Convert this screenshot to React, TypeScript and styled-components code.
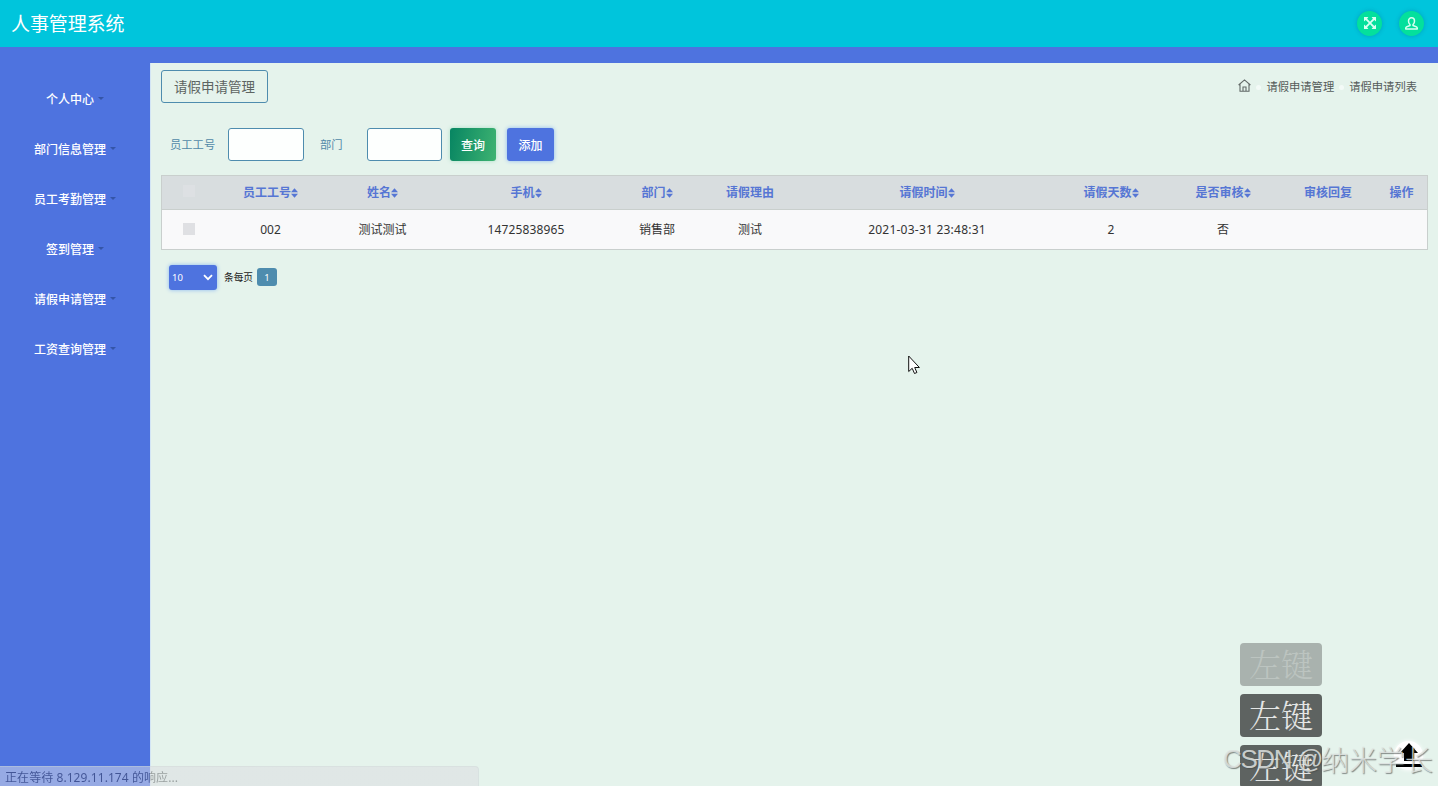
import React from "react";
import styled, { createGlobalStyle } from "styled-components";

const GlobalStyle = createGlobalStyle`
  * { box-sizing: border-box; }
  html, body { margin: 0; padding: 0; overflow: hidden; }
  body {
    font-family: "Noto Sans", "Noto Sans CJK SC", sans-serif;
    font-size: 12px;
    background: #e5f3ec;
  }
`;

const Page = styled.div`
  position: relative;
  display: flex;
  flex-direction: column;
  height: 786px;
  overflow: hidden;
`;

const TopBar = styled.header`
  display: flex;
  align-items: center;
  justify-content: space-between;
  height: 47px;
  padding: 0 14px 0 11px;
  background: #00c5dc;
`;

const Brand = styled.h1`
  margin: 0;
  padding-bottom: 2px;
  font: 400 19px/45px "Noto Sans CJK SC", sans-serif;
  letter-spacing: -0.1px;
  color: #fff;
`;

const TopActions = styled.div`
  display: flex;
  gap: 17px;
  padding-bottom: 1px;
`;

const RoundButton = styled.button`
  display: flex;
  align-items: center;
  justify-content: center;
  width: 25px;
  height: 25px;
  padding: 0;
  border: 0;
  border-radius: 50%;
  background: #04e09c;
  box-shadow: 0 0 4px rgba(0, 120, 150, 0.45);
`;

const Body = styled.div`
  display: flex;
  flex: 1;
  padding-top: 16px;
  background: #4e73df;
`;

const Sidebar = styled.nav`
  display: flex;
  flex-direction: column;
  width: 150px;
  padding-top: 11px;
`;

const MenuItem = styled.a`
  display: flex;
  align-items: center;
  justify-content: center;
  height: 50px;
  font: 500 12px/50px "Noto Sans CJK SC", sans-serif;
  color: #fff;
`;

const Caret = styled.i`
  margin: -1px 0 0 4px;
  border: 3px solid transparent;
  border-top-color: #3455a8;
  border-bottom: 0;
`;

const Main = styled.main`
  flex: 1;
  padding: 7px 10px 0 10px;
  border-left: 1px solid #d3e5f5;
  background: #e5f3ec;
`;

const TitleRow = styled.div`
  display: flex;
  align-items: flex-start;
  justify-content: space-between;
  height: 58px;
`;

const TitleBox = styled.h2`
  width: 107px;
  height: 33px;
  margin: 0;
  border: 1px solid #4e8cae;
  border-radius: 3px;
  font: 400 13.5px/30px "Noto Sans CJK SC", sans-serif;
  text-align: center;
  color: #5d6462;
`;

const Crumbs = styled.div`
  display: flex;
  align-items: center;
  height: 33px;
  padding-right: 11px;
  font: 400 11.3px/33px "Noto Sans CJK SC", sans-serif;
  color: #555c5a;
`;

const HomeIcon = styled.svg`
  margin: -3px 5px 0 0;
`;

const Dot = styled.i`
  width: 5px;
  height: 5px;
  margin: 2px 5px 0;
  border-radius: 50%;
  background: #f3faf7;

  &:first-of-type { margin-left: 0; }
`;

const SearchRow = styled.form`
  display: flex;
  align-items: center;
  height: 33px;
  padding-left: 9px;
`;

const FieldLabel = styled.label<{ $w: number }>`
  width: ${(p) => p.$w}px;
  font: 400 11.3px/33px "Noto Sans CJK SC", sans-serif;
  color: #5189a8;
`;

const Field = styled.input<{ $w: number; $gap: number }>`
  width: ${(p) => p.$w}px;
  height: 33px;
  margin-right: ${(p) => p.$gap}px;
  border: 1px solid #4e8cae;
  border-radius: 3px;
  background: #fdfffe;
`;

const ActionButton = styled.button<{ $w: number; $bg: string; $glow: string }>`
  width: ${(p) => p.$w}px;
  height: 33px;
  margin-right: 11px;
  padding: 0;
  border: 0;
  border-radius: 3px;
  background: ${(p) => p.$bg};
  box-shadow: 0 0 4px ${(p) => p.$glow};
  font: 500 12px/33px "Noto Sans CJK SC", sans-serif;
  color: #fff;
`;

const Table = styled.table`
  width: 1267px;
  margin-top: 14px;
  table-layout: fixed;
  border: 1px solid #c9cfcd;
  border-spacing: 0;
  text-align: center;
`;

const HeadCell = styled.th`
  height: 34px;
  padding: 0 0 2px;
  border-bottom: 1px solid #c9cfcd;
  background: #d8dddf;
  font: 700 12px/30px "Noto Sans CJK SC", sans-serif;
  color: #5676d4;
  white-space: nowrap;
`;

const Cell = styled.td`
  height: 39px;
  padding: 0;
  background: #f9f9fa;
  line-height: 38px;
  color: #333;
  white-space: nowrap;
`;

const Value = styled.span<{ $ls: number }>`
  letter-spacing: ${(p) => p.$ls}px;
`;

const CheckBox = styled.i<{ $bg: string }>`
  display: block;
  width: 12px;
  height: 12px;
  margin: 0 auto 1px;
  background: ${(p) => p.$bg};
`;

const SortIcon = styled.svg`
  width: 7px;
  height: 10px;
  vertical-align: -1px;
`;

const Pager = styled.div`
  display: flex;
  align-items: center;
  height: 25px;
  margin-top: 15px;
  padding-left: 8px;
`;

const PageSize = styled.div`
  display: flex;
  align-items: center;
  justify-content: space-between;
  width: 48px;
  height: 25px;
  padding: 0 4px 0 3px;
  border-radius: 3px;
  background: #4e73df;
  box-shadow: 0 0 4px #8cb8f0;
  font-size: 9.5px;
  color: #fff;
`;

const PerPage = styled.span`
  margin: 0 4px 0 7px;
  font: 400 9.7px/25px "Noto Sans CJK SC", sans-serif;
  color: #222;
`;

const PageNumber = styled.span`
  width: 20px;
  height: 18px;
  margin-bottom: 1px;
  border-radius: 3px;
  background: #4e8cae;
  font-size: 9.5px;
  line-height: 19px;
  text-align: center;
  color: #fff;
`;

const StatusBubble = styled.div`
  position: absolute;
  left: 0;
  bottom: 0;
  width: 479px;
  height: 20px;
  padding-left: 5px;
  border: 1px solid rgba(205, 215, 212, 0.4);
  border-width: 1px 1px 0 0;
  border-radius: 0 4px 0 0;
  background: linear-gradient(90deg, rgba(222, 225, 233, 0.5) 150px, rgba(222, 225, 228, 0.7) 150px);
  line-height: 21px;
  letter-spacing: 0.07px;
`;

const StatusText = styled.span`
  background: linear-gradient(90deg, #425596 145px, #969d9d 145px);
  background-clip: text;
  color: transparent;
`;

const KeyStack = styled.div`
  position: absolute;
  left: 1240px;
  top: 643px;
  display: flex;
  flex-direction: column;
  gap: 8px;
`;

const KeyHint = styled.div<{ $faded?: boolean }>`
  width: 82px;
  height: 43px;
  border-radius: 4px;
  background: ${(p) => (p.$faded ? "#a9b2ae" : "#5e6361")};
  font: 300 32px/40px "Noto Serif CJK SC", "Noto Sans CJK SC", serif;
  text-align: center;
  color: ${(p) => (p.$faded ? "#bcc4c0" : "#e4e6e5")};
`;

const BackToTop = styled.div`
  position: absolute;
  left: 1394px;
  top: 741px;
  display: flex;
  justify-content: center;
  width: 29px;
  height: 29px;
  border-radius: 50%;
  background: #fff;
  box-shadow: 0 0 4px #fff;
`;

const Watermark = styled.div`
  position: absolute;
  left: 1223px;
  top: 740px;
  display: flex;
  font: 300 28px/38px "Noto Sans CJK SC", sans-serif;
  letter-spacing: -0.1px;
  color: rgba(222, 226, 224, 0.85);
  text-shadow: 1px 1px 1px rgba(70, 75, 73, 0.65);
  white-space: nowrap;
`;

const WatermarkSite = styled.span`
  width: 98px;
  font-family: "Liberation Sans", sans-serif;
  font-size: 26px;
  letter-spacing: -1.4px;
`;

const Pointer = styled.svg`
  position: absolute;
  left: 908px;
  top: 355px;
`;

const menu = ["个人中心", "部门信息管理", "员工考勤管理", "签到管理", "请假申请管理", "工资查询管理"];

const columns: { label: string; width: number; sort?: boolean }[] = [
  { label: "员工工号", width: 109, sort: true },
  { label: "姓名", width: 115, sort: true },
  { label: "手机", width: 172, sort: true },
  { label: "部门", width: 90, sort: true },
  { label: "请假理由", width: 96 },
  { label: "请假时间", width: 258, sort: true },
  { label: "请假天数", width: 110, sort: true },
  { label: "是否审核", width: 114, sort: true },
  { label: "审核回复", width: 96 },
  { label: "操作", width: 51 },
];

const record = ["002", "测试测试", "14725838965", "销售部", "测试", "2021-03-31 23:48:31", "2", "否", "", ""];

const spacing = (value: string) => (value.length > 11 ? 0.23 : value.length === 11 ? 0.14 : 0);

export default function App() {
  return (
    <Page>
      <GlobalStyle />
      <TopBar>
        <Brand>人事管理系统</Brand>
        <TopActions>
          <RoundButton aria-label="全屏">
            <svg width="12" height="12" viewBox="0 0 12 12" fill="#d9fff2">
              <path d="M0 0h4.400L3.100 1.700 6 4.800l2.900-3.100L7.600 0H12v4.400l-1.700-1.300L7.200 6l3.100 2.900L12 7.600V12H7.600l1.300-1.700L6 7.200l-2.900 3.100L4.400 12H0V7.600l1.700 1.300L4.800 6 1.700 3.100 0 4.400z" />
            </svg>
          </RoundButton>
          <RoundButton aria-label="用户">
            <svg width="13" height="13" viewBox="0 0 13 13" fill="none" stroke="#d9fff2" strokeWidth="1.500" strokeLinejoin="round">
              <path d="M5 7.700C3.900 6.800 3.500 5.500 3.500 4 3.500 2 4.700.8 6.500.8S9.500 2 9.500 4c0 1.500-.4 2.800-1.500 3.700v.8l3.500 1.400c.6.3.8.9.8 2H.7c0-1.100.2-1.700.8-2L5 8.500z" />
            </svg>
          </RoundButton>
        </TopActions>
      </TopBar>
      <Body>
        <Sidebar>
          {menu.map((m) => (
            <MenuItem key={m}>
              {m}
              <Caret />
            </MenuItem>
          ))}
        </Sidebar>
        <Main>
          <TitleRow>
            <TitleBox>请假申请管理</TitleBox>
            <Crumbs>
              <HomeIcon width="13" height="13" viewBox="0 0 13 13" fill="none" stroke="#626967" strokeWidth="1.100">
                <path d="M.6 6 6.500.9 12.400 6M2 5v7.300h9V5M5 12.300V8h3v4.300" />
              </HomeIcon>
              <Dot />
              <span>请假申请管理</span>
              <Dot />
              <span>请假申请列表</span>
            </Crumbs>
          </TitleRow>
          <SearchRow>
            <FieldLabel $w={58}>员工工号</FieldLabel>
            <Field $w={76} $gap={16} />
            <FieldLabel $w={47}>部门</FieldLabel>
            <Field $w={75} $gap={8} />
            <ActionButton type="button" $w={46} $bg="linear-gradient(100deg, #078562, #3eb371)" $glow="#a9dec5">
              查询
            </ActionButton>
            <ActionButton type="button" $w={47} $bg="#4e73df" $glow="#8cb8f0">
              添加
            </ActionButton>
          </SearchRow>
          <Table>
            <colgroup>
              <col style={{ width: 54 }} />
              {columns.map((c) => (
                <col key={c.label} style={{ width: c.width }} />
              ))}
            </colgroup>
            <thead>
              <tr>
                <HeadCell>
                  <CheckBox $bg="#dde0e3" />
                </HeadCell>
                {columns.map((c) => (
                  <HeadCell key={c.label}>
                    {c.label}
                    {c.sort && (
                      <SortIcon viewBox="0 0 7 10" fill="#5676d4">
                        <path d="M0 4.300 3.500.3 7 4.300zM0 5.700h7L3.500 9.700z" />
                      </SortIcon>
                    )}
                  </HeadCell>
                ))}
              </tr>
            </thead>
            <tbody>
              <tr>
                <Cell>
                  <CheckBox $bg="#dfe0e3" />
                </Cell>
                {record.map((v, i) => (
                  <Cell key={i}>
                    <Value $ls={spacing(v)}>{v}</Value>
                  </Cell>
                ))}
              </tr>
            </tbody>
          </Table>
          <Pager>
            <PageSize>
              10
              <svg width="10" height="7" viewBox="0 0 10 7" fill="none" stroke="#fff" strokeWidth="1.800">
                <path d="M1 1.200 5 5.200 9 1.200" />
              </svg>
            </PageSize>
            <PerPage>条每页</PerPage>
            <PageNumber>1</PageNumber>
          </Pager>
        </Main>
      </Body>
      <StatusBubble>
        <StatusText>正在等待 8.129.11.174 的响应...</StatusText>
      </StatusBubble>
      <KeyStack>
        <KeyHint $faded>左键</KeyHint>
        <KeyHint>左键</KeyHint>
        <KeyHint>左键</KeyHint>
      </KeyStack>
      <BackToTop>
        <svg width="26" height="27" viewBox="0 0 26 27" fill="#000">
          <path d="M13 2 22 12h-4v8H8v-8H4zM0 23h26v3H0z" />
        </svg>
      </BackToTop>
      <Watermark>
        <WatermarkSite>CSDN @</WatermarkSite>
        纳米学长
      </Watermark>
      <Pointer width="13" height="20" viewBox="0 0 13 20" fill="#fff" stroke="#111" strokeWidth="1">
        <path d="M.7 1v15.500l3.500-3.200 2.300 5.200 2.400-1-2.200-5h4.700z" />
      </Pointer>
    </Page>
  );
}
